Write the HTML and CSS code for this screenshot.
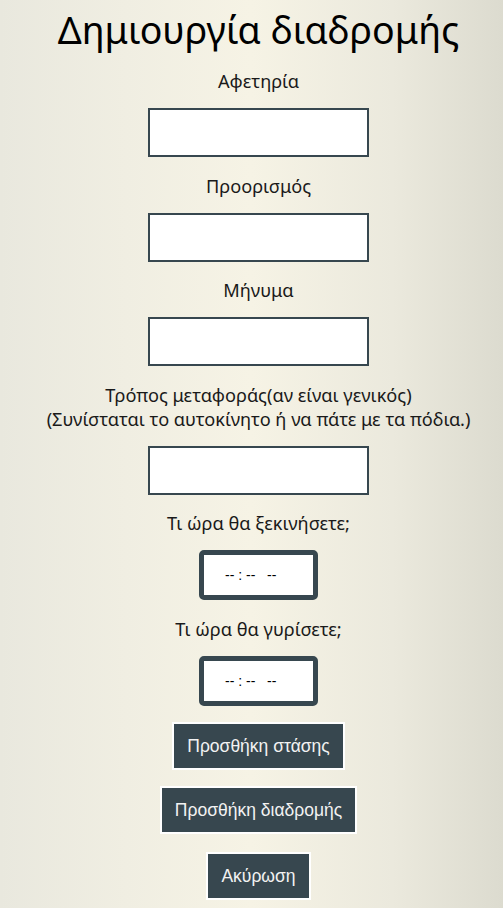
FILE: index.html
```html
<!DOCTYPE html>
<html lang="el">
<head>
<meta charset="utf-8">
<title>Δημιουργία διαδρομής</title>
<link rel="stylesheet" href="styles.css">
</head>
<body>
<main class="page">
  <h1 class="title">Δημιουργία διαδρομής</h1>
  <form class="form">
    <label class="label" for="start">Αφετηρία</label>
    <input class="text-input" id="start" type="text">
    <label class="label" for="dest">Προορισμός</label>
    <input class="text-input" id="dest" type="text">
    <label class="label" for="msg">Μήνυμα</label>
    <input class="text-input" id="msg" type="text">
    <label class="label" for="mode">Τρόπος μεταφοράς(αν είναι γενικός)<br>(Συνίσταται το αυτοκίνητο ή να πάτε με τα πόδια.)</label>
    <input class="text-input" id="mode" type="text">
    <label class="label" for="t1">Τι ώρα θα ξεκινήσετε;</label>
    <div class="time-input" id="t1">-- : --&nbsp;&nbsp;&nbsp;--</div>
    <label class="label" for="t2">Τι ώρα θα γυρίσετε;</label>
    <div class="time-input" id="t2">-- : --&nbsp;&nbsp;&nbsp;--</div>
    <button class="btn btn-1" type="button">Προσθήκη στάσης</button>
    <button class="btn btn-2" type="button">Προσθήκη διαδρομής</button>
    <button class="btn btn-3" type="button">Ακύρωση</button>
  </form>
</main>
</body>
</html>
```

FILE: styles.css
```css
html, body {
  margin: 0;
  padding: 0;
  height: 100%;
}
body {
  background: linear-gradient(to right, #e9e8de 0%, #f0eee2 25%, #f6f3e5 50%, #ebe9dd 78%, #dcdbcf 100%);
  font-family: "Noto Sans", "Liberation Sans", sans-serif;
  color: #111;
  overflow: hidden;
}
.page {
  display: flex;
  flex-direction: column;
  align-items: center;
  padding-left: 14px;
}
.title {
  margin: 6px 0 0;
  font-size: 37.5px;
  line-height: 48px;
  font-weight: 400;
  color: #000;
}
.form {
  display: flex;
  flex-direction: column;
  align-items: center;
  margin-top: 15px;
}
.label {
  font-size: 18.2px;
  line-height: 24px;
  text-align: center;
  margin-bottom: 15px;
  color: #1a1a1a;
  white-space: nowrap;
}
.text-input {
  box-sizing: border-box;
  width: 221px;
  height: 49px;
  border: 2px solid #37474f;
  background: #fff;
  margin: 0 0 16.5px;
  padding: 0 8px;
  font-size: 16px;
}
.time-input {
  box-sizing: border-box;
  width: 119px;
  height: 50px;
  border: 5px solid #37474f;
  border-radius: 5px;
  background: #fff;
  margin-bottom: 16.5px;
  padding-left: 21px;
  display: flex;
  align-items: center;
  font-family: "Liberation Sans", sans-serif;
  font-size: 14px;
  color: #000;
  white-space: pre;
}
.btn {
  box-sizing: border-box;
  height: 48px;
  background: #37474f;
  color: #f2f2f2;
  border: 2px solid #fff;
  font-family: "Liberation Sans", sans-serif;
  font-size: 17.5px;
  padding: 0 13px;
  margin-bottom: 16px;
}
.btn-3 {
  margin-top: 2px;
  margin-bottom: 0;
}
```
